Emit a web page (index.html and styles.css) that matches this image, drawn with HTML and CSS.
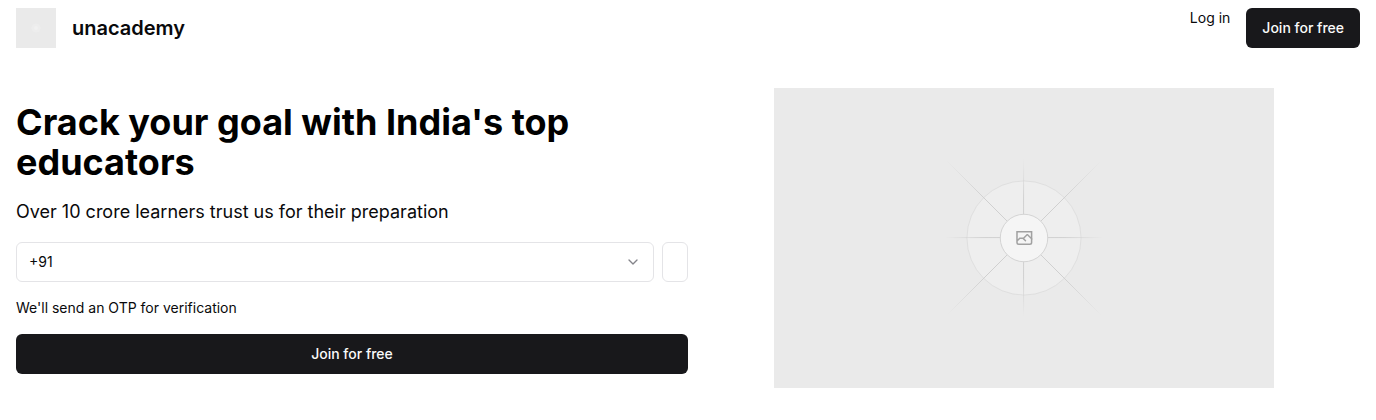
FILE: index.html
```html
<!DOCTYPE html>
<html lang="en">
<head>
<meta charset="utf-8">
<meta name="viewport" content="width=device-width, initial-scale=1">
<title>unacademy</title>
<link rel="stylesheet" href="styles.css">
</head>
<body>
<header class="site-header">
  <div class="brand">
    <svg class="brand-logo" viewBox="0 0 1200 1200" aria-hidden="true">
      <rect width="1200" height="1200" fill="#eaeaea"/>
      <circle cx="600" cy="600" r="137" fill="#ededed"/>
      <circle cx="600" cy="600" r="57" fill="#f1f1f1"/>
    </svg>
    <h1 class="brand-name">unacademy</h1>
  </div>
  <nav class="site-nav">
    <a class="login-link" href="#">Log in</a>
    <button class="button" type="button">Join for free</button>
  </nav>
</header>
<main class="hero">
  <form class="signup">
    <h2 class="hero-title">Crack your goal with India's top educators</h2>
    <p class="hero-subtitle">Over 10 crore learners trust us for their preparation</p>
    <div class="phone-row">
      <div class="select-wrap">
        <select class="code-select" aria-label="Country code"><option>+91</option></select>
        <svg class="chevron" viewBox="0 0 24 24" aria-hidden="true"><path d="m6 9 6 6 6-6"/></svg>
      </div>
      <input class="phone-input" type="tel" aria-label="Mobile number">
    </div>
    <p class="hint">We'll send an OTP for verification</p>
    <button class="button" type="submit">Join for free</button>
  </form>
  <div class="media">
    <svg class="placeholder" viewBox="0 0 1200 720" role="img" aria-label="Image placeholder">
      <defs>
        <radialGradient id="ray" gradientUnits="userSpaceOnUse" cx="600" cy="360" r="190">
          <stop offset="0.5" stop-color="#d0d0d0"/>
          <stop offset="1" stop-color="#d0d0d0" stop-opacity="0"/>
        </radialGradient>
        <radialGradient id="ray-diagonal" gradientUnits="userSpaceOnUse" cx="600" cy="360" r="262">
          <stop offset="0.5" stop-color="#d0d0d0"/>
          <stop offset="1" stop-color="#d0d0d0" stop-opacity="0"/>
        </radialGradient>
      </defs>
      <rect width="1200" height="720" fill="#eaeaea"/>
      <circle cx="600" cy="360" r="137" fill="#eeeeee" stroke="#dfdfdf" stroke-width="2.400"/>
      <path d="M599 170V550M410 359H790" stroke="url(#ray)" stroke-width="2.400"/>
      <path d="M414 174L786 546M786 174L414 546" stroke="url(#ray-diagonal)" stroke-width="2.400"/>
      <circle cx="600" cy="360" r="57" fill="#f5f5f5" stroke="#d4d4d4" stroke-width="2.400"/>
      <path transform="translate(0 -240)" fill="#a1a1a1" fill-rule="evenodd" clip-rule="evenodd" d="M616.426 586.580h-31.434v16.176l3.553-3.554.531-.531h9.068l.074-.074 8.463-8.463h2.565l7.180 7.181V586.580Zm-15.715 14.654 3.698 3.699 1.283 1.282-2.565 2.565-1.282-1.283-5.200-5.199h-6.066l-5.514 5.514-.073.073v2.876a2.418 2.418 0 0 0 2.418 2.418h26.598a2.418 2.418 0 0 0 2.418-2.418v-8.317l-8.463-8.463-7.181 7.181-.071.072Zm-19.347 5.442v4.085a6.045 6.045 0 0 0 6.046 6.045h26.598a6.044 6.044 0 0 0 6.045-6.045v-7.108l1.356-1.355-1.282-1.283-.074-.073v-17.989h-38.689v23.430l-.146.146.146.147Z"/>
    </svg>
  </div>
</main>
</body>
</html>
```
FILE: styles.css
```css
* { box-sizing: border-box; }
body { margin: 0; background: #fff; color: #09090b; font: 14px/20px Inter, sans-serif; }
h1, h2, p { margin: 0; }
button, input, select { font: inherit; }
.site-header { display: flex; justify-content: space-between; padding: 8px 16px; }
.brand { display: flex; align-items: center; gap: 16px; }
.brand-logo { width: 40px; height: 40px; }
.brand-name { font-size: 20px; line-height: 28px; font-weight: 600; }
.site-nav { display: flex; align-items: flex-start; gap: 16px; }
.login-link { color: inherit; text-decoration: none; }
.button { height: 40px; padding: 8px 16px; border: 0; border-radius: 6px; background: #18181b; color: #fafafa; font-weight: 500; }
.hero { display: grid; grid-template-columns: 1fr 1fr; align-items: center; padding: 32px 16px; }
.signup { display: flex; flex-direction: column; gap: 16px; }
.hero-title { color: #000; font-size: 36px; line-height: 40px; font-weight: 700; }
.hero-subtitle { font-size: 18px; line-height: 28px; }
.phone-row { display: flex; gap: 8px; }
.select-wrap { position: relative; flex: 1; }
.code-select { appearance: none; width: 100%; height: 40px; padding: 8px 12px; border: 1px solid #e4e4e7; border-radius: 6px; background: #fff; color: inherit; }
.chevron { position: absolute; right: 13px; top: 12px; width: 16px; height: 16px; fill: none; stroke: #84848a; stroke-width: 2; stroke-linecap: round; stroke-linejoin: round; pointer-events: none; }
.phone-input { width: 26px; height: 40px; padding: 8px 12px; border: 1px solid #e4e4e7; border-radius: 6px; background: #fff; }
.media { display: flex; justify-content: center; }
.placeholder { width: 100%; max-width: 500px; }
```
